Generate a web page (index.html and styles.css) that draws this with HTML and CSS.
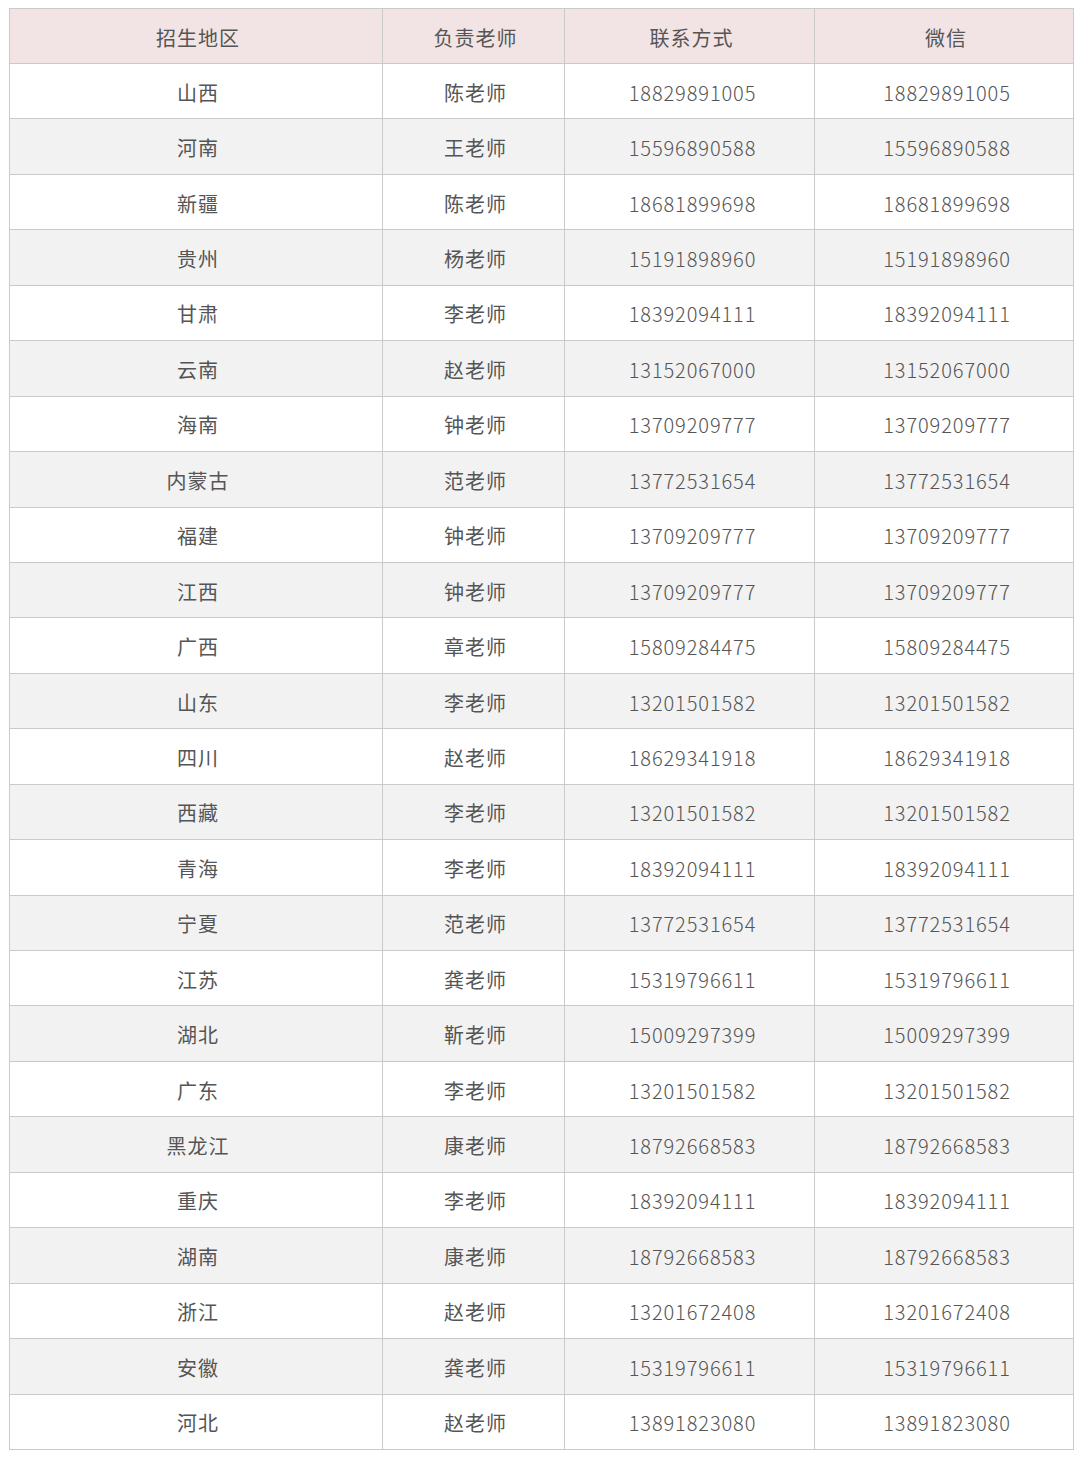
FILE: index.html
```html
<!DOCTYPE html>
<html lang="zh">
<head>
<meta charset="utf-8">
<link rel="stylesheet" href="styles.css">
</head>
<body>
<table class="tbl">
<colgroup><col class="c1"><col class="c2"><col class="c3"><col class="c4"></colgroup>
<thead>
<tr><th>招生地区</th><th>负责老师</th><th>联系方式</th><th>微信</th></tr>
</thead>
<tbody>
<tr><td>山西</td><td>陈老师</td><td>18829891005</td><td>18829891005</td></tr>
<tr><td>河南</td><td>王老师</td><td>15596890588</td><td>15596890588</td></tr>
<tr><td>新疆</td><td>陈老师</td><td>18681899698</td><td>18681899698</td></tr>
<tr><td>贵州</td><td>杨老师</td><td>15191898960</td><td>15191898960</td></tr>
<tr><td>甘肃</td><td>李老师</td><td>18392094111</td><td>18392094111</td></tr>
<tr><td>云南</td><td>赵老师</td><td>13152067000</td><td>13152067000</td></tr>
<tr><td>海南</td><td>钟老师</td><td>13709209777</td><td>13709209777</td></tr>
<tr><td>内蒙古</td><td>范老师</td><td>13772531654</td><td>13772531654</td></tr>
<tr><td>福建</td><td>钟老师</td><td>13709209777</td><td>13709209777</td></tr>
<tr><td>江西</td><td>钟老师</td><td>13709209777</td><td>13709209777</td></tr>
<tr><td>广西</td><td>章老师</td><td>15809284475</td><td>15809284475</td></tr>
<tr><td>山东</td><td>李老师</td><td>13201501582</td><td>13201501582</td></tr>
<tr><td>四川</td><td>赵老师</td><td>18629341918</td><td>18629341918</td></tr>
<tr><td>西藏</td><td>李老师</td><td>13201501582</td><td>13201501582</td></tr>
<tr><td>青海</td><td>李老师</td><td>18392094111</td><td>18392094111</td></tr>
<tr><td>宁夏</td><td>范老师</td><td>13772531654</td><td>13772531654</td></tr>
<tr><td>江苏</td><td>龚老师</td><td>15319796611</td><td>15319796611</td></tr>
<tr><td>湖北</td><td>靳老师</td><td>15009297399</td><td>15009297399</td></tr>
<tr><td>广东</td><td>李老师</td><td>13201501582</td><td>13201501582</td></tr>
<tr><td>黑龙江</td><td>康老师</td><td>18792668583</td><td>18792668583</td></tr>
<tr><td>重庆</td><td>李老师</td><td>18392094111</td><td>18392094111</td></tr>
<tr><td>湖南</td><td>康老师</td><td>18792668583</td><td>18792668583</td></tr>
<tr><td>浙江</td><td>赵老师</td><td>13201672408</td><td>13201672408</td></tr>
<tr><td>安徽</td><td>龚老师</td><td>15319796611</td><td>15319796611</td></tr>
<tr><td>河北</td><td>赵老师</td><td>13891823080</td><td>13891823080</td></tr>
</tbody>
</table>
</body>
</html>
```
FILE: styles.css
```css
html, body {
  margin: 0;
  padding: 0;
  background: #ffffff;
}
body {
  padding: 8px 0 0 9px;
  font-family: "Noto Sans CJK SC", "Noto Sans", sans-serif;
  color: #555555;
}
.tbl {
  border-collapse: collapse;
  table-layout: fixed;
  width: 1064px;
}
.c1 { width: 373px; }
.c2 { width: 182px; }
.c3 { width: 250px; }
.c4 { width: 259px; }
.tbl th,
.tbl td {
  border: 1px solid #cacaca;
  text-align: center;
  font-size: 20px;
  font-weight: 400;
  letter-spacing: 1px;
  padding: 3px 0 0 4px;
  height: 51.44px;
  line-height: 24px;
  box-sizing: border-box;
}
.tbl td:nth-child(n+3) {
  font-weight: 300;
  letter-spacing: 0.9px;
  padding-left: 6px;
}
.tbl thead th {
  background: #f2e3e4;
  height: 55px;
}
.tbl tbody tr {
  height: 55.44px;
}
.tbl tbody tr:nth-child(even) td {
  background: #f2f2f2;
}
```
